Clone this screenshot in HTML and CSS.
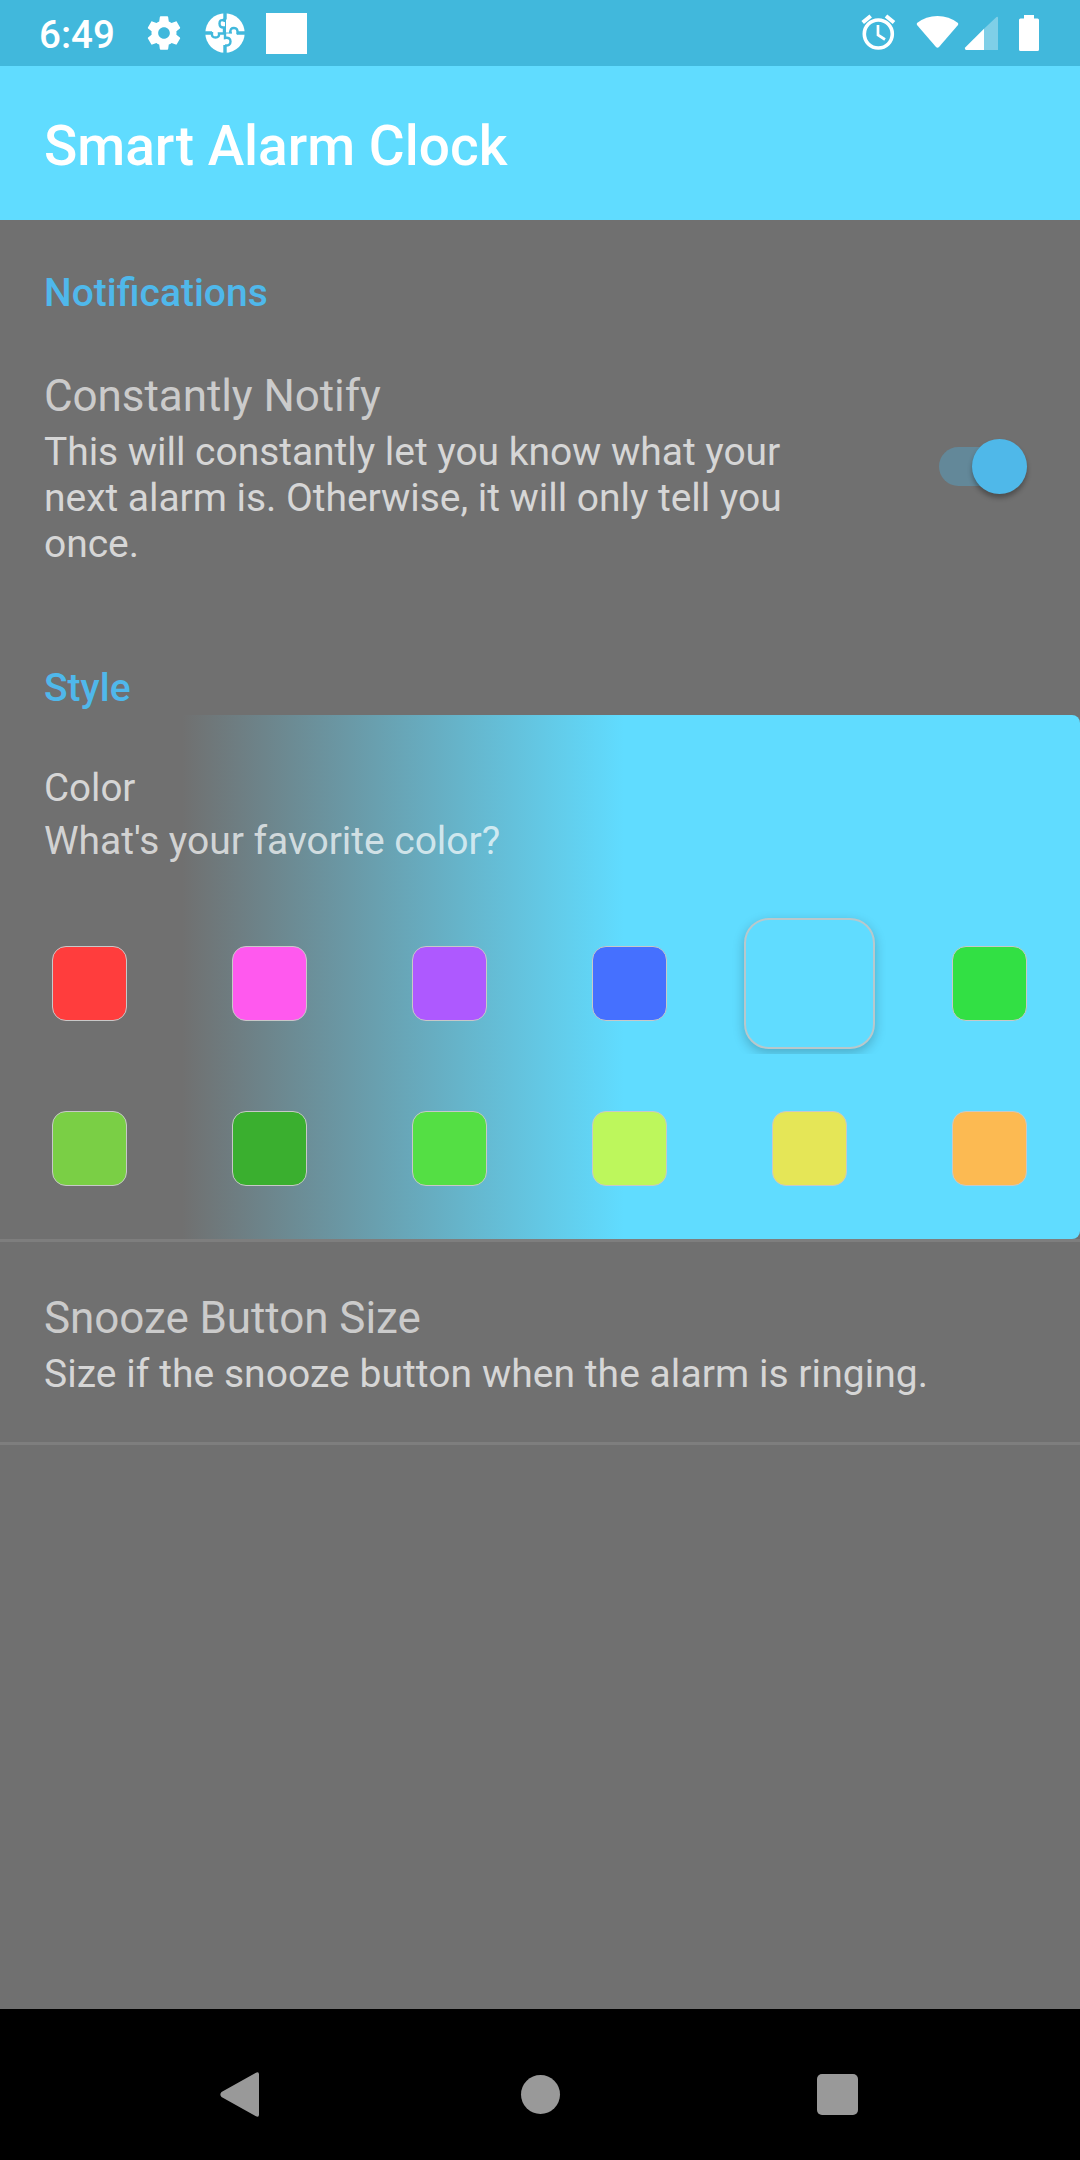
FILE: index.html
```html
<!DOCTYPE html>
<html lang="en">
<head>
<meta charset="utf-8">
<title>Smart Alarm Clock</title>
<link rel="stylesheet" href="styles.css">
</head>
<body>
<div class="screen">
  <header class="status-bar">
    <span class="clock">6:49</span>
    <svg class="gear" width="40" height="40" viewBox="0 0 24 24"><path fill="#fff" d="M19.43 12.98c.04-.32.07-.64.07-.98s-.03-.66-.07-.98l2.110-1.650c.19-.15.24-.42.12-.64l-2-3.460c-.12-.22-.39-.3-.61-.22l-2.490 1c-.52-.4-1.080-.73-1.690-.98l-.38-2.650C14.460 2.180 14.250 2 14 2h-4c-.25 0-.46.18-.49.42l-.38 2.650c-.61.25-1.170.59-1.690.98l-2.490-1c-.23-.09-.49 0-.61.22l-2 3.460c-.13.22-.07.49.12.64l2.110 1.650c-.04.32-.07.65-.07.98s.03.66.07.98l-2.110 1.650c-.19.15-.24.42-.12.64l2 3.460c.12.22.39.3.61.22l2.490-1c.52.4 1.080.73 1.690.98l.38 2.650c.03.24.24.42.49.42h4c.25 0 .46-.18.49-.42l.38-2.650c.61-.25 1.170-.59 1.690-.98l2.490 1c.23.09.49 0 .61-.22l2-3.460c.12-.22.07-.49-.12-.64l-2.110-1.650zM12 15.500c-1.930 0-3.500-1.570-3.500-3.500s1.570-3.500 3.500-3.500 3.500 1.570 3.500 3.500-1.570 3.500-3.500 3.500z"/></svg>
    <svg class="puzzle" width="40" height="40" viewBox="0 0 40 40">
      <circle cx="20" cy="20" r="19.700" fill="#fff"/>
      <g fill="none" stroke="#41b8dc">
        <path stroke-width="3.400" d="M20 0V6.500M20 32V40M0 20H7M32 20H40"/>
        <path stroke-width="2.400" d="M19 5.500V7.500Q14.500 6 14.500 10.500T19 14.500V20M7 19V20.500Q6.500 24.500 10.500 24.500T14 20.500H20M20 20V25Q25.500 24 25.500 28.500T20 32.500M33 20H32.500Q33 15 29 15T25.500 19H24"/>
        <path stroke-width="1" d="M20.500 5V20H27"/>
      </g>
    </svg>
    <span class="app-square"></span>
    <svg class="system" width="190" height="66" viewBox="850 0 190 66">
      <g fill="none" stroke="#fff" stroke-width="3.600"><circle cx="878.300" cy="34" r="14"/><path d="M878 25v10l7 4.500" stroke-width="2.700"/><path d="M862.700 22.500l8-6.500M894 22.500l-8-6.500" stroke-width="4"/></g>
      <path fill="#fff" d="M917 23Q926 16 937.500 16T958 23Q958.500 24 958 25L939 47Q937.500 48.500 936 47L917 25Q916.500 24 917 23z"/>
      <path fill="#fff" opacity=".33" d="M984 28.700L996.500 17q1.500-.8 1.500 1V50h-14z"/>
      <path fill="#fff" d="M984 28.700V50h-18q-2-1-.8-2.500z"/>
      <path fill="#fff" d="M1024 15h10v3.500h3.500q1.500 0 1.500 1.500v29.500q0 1.500-1.500 1.500h-17q-1.500 0-1.500-1.500V20q0-1.500 1.500-1.500h3.500z"/>
    </svg>
  </header>
  <div class="app-bar"><h1>Smart Alarm Clock</h1></div>
  <main class="settings">
    <h2 class="category first">Notifications</h2>
    <section class="notify">
      <div class="notify-text">
        <h3>Constantly Notify</h3>
        <p>This will constantly let you know what your next alarm is. Otherwise, it will only tell you once.</p>
      </div>
      <div class="switch"><span class="thumb"></span></div>
    </section>
    <h2 class="category">Style</h2>
    <section class="color-panel">
      <p class="color-title">Color</p>
      <p class="color-summary">What's your favorite color?</p>
      <div class="swatches">
        <div class="cell"><span class="swatch red"></span></div>
        <div class="cell"><span class="swatch pink"></span></div>
        <div class="cell"><span class="swatch purple"></span></div>
        <div class="cell"><span class="swatch blue"></span></div>
        <div class="cell"><span class="swatch cyan selected"></span></div>
        <div class="cell"><span class="swatch green"></span></div>
        <div class="cell"><span class="swatch olive"></span></div>
        <div class="cell"><span class="swatch forest"></span></div>
        <div class="cell"><span class="swatch lime"></span></div>
        <div class="cell"><span class="swatch pale"></span></div>
        <div class="cell"><span class="swatch yellow"></span></div>
        <div class="cell"><span class="swatch orange"></span></div>
      </div>
    </section>
    <section class="snooze">
      <h3>Snooze Button Size</h3>
      <p>Size if the snooze button when the alarm is ringing.</p>
    </section>
  </main>
  <nav class="nav-bar">
    <svg width="40" height="46" viewBox="0 0 40 46"><path fill="#999" d="M35.500 1Q39 -.8 39 2.500V42.500Q39 46 35.500 44L1.500 25Q-.8 22.500 1.500 20z"/></svg>
    <span class="home"></span>
    <span class="recent"></span>
  </nav>
</div>
</body>
</html>
```
FILE: styles.css
```css
* { box-sizing: border-box; }
body, h1, h2, h3, p { margin: 0; }
body { font-family: Roboto, sans-serif; background: #707070; }
.screen { width: 1080px; height: 2160px; display: flex; flex-direction: column; overflow: hidden; }

.status-bar { height: 66px; background: #41b8dc; display: flex; align-items: center; color: #fff; padding: 0 40px 0 39px; }
.clock { font-size: 38.5px; font-weight: 500; line-height: 66px; width: 105px; padding-top: 3px; }
.puzzle { margin-left: 21px; }
.app-square { width: 41px; height: 41px; background: #fff; margin-left: 21px; }
.system { margin-left: auto; }

.app-bar { height: 154px; background: #60dcff; padding: 48px 44px 0; }
h1 { font-size: 55px; line-height: 64px; font-weight: 500; color: #fff; }

.settings { flex: 1; }
.category { font-size: 39px; line-height: 46px; font-weight: 500; color: #4fb8eb; padding: 0 44px; margin-top: 98px; }
.category.first { margin-top: 0; padding-top: 50px; }
.notify { display: flex; align-items: center; padding: 54px 53px 0 44px; }
.notify-text { width: 760px; }
h3 { font-size: 44px; line-height: 52px; font-weight: 400; letter-spacing: -.07px; color: #cbcbcb; }
.notify p, .snooze p { font-size: 39px; line-height: 46px; color: #d6d6d6; padding-top: 7px; }
.notify p { letter-spacing: -.04px; }
.snooze p { letter-spacing: .05px; }
.switch { margin: 0 0 5px auto; width: 88px; height: 39px; border-radius: 20px; background: #638899; display: flex; align-items: center; justify-content: flex-end; }
.thumb { width: 55px; height: 55px; flex: none; border-radius: 50%; background: #4fb8e9; box-shadow: 0 4px 5px rgba(0,0,0,.3); }

.color-panel { height: 524px; margin-top: 4px; padding-top: 50px; border-radius: 8px; background: linear-gradient(90deg, #707070 182px, #60dcff 624px); }
.color-title, .color-summary { font-size: 38.5px; line-height: 46px; color: #d6d6d6; padding-left: 44px; }
.color-summary { font-size: 39px; letter-spacing: -.04px; color: rgba(255,255,255,.71); margin-top: 7px; }
.swatches { display: grid; grid-template-columns: repeat(6, 180px); grid-template-rows: 165px 165px; margin: 37px 0 0 -1px; }
.cell { display: flex; align-items: center; justify-content: center; }
.swatch { width: 75px; height: 75px; border: 1px solid #c8c8c8; border-radius: 14px; }
.selected { width: 131px; height: 131px; flex: none; border: 2px solid #b8c8cc; border-radius: 25px; box-shadow: 0 4px 12px rgba(0,0,0,.22); clip-path: inset(-12px -12px -5px); }
.red { background: #ff3d3d; }
.pink { background: #ff59ee; }
.purple { background: #ae59ff; }
.blue { background: #4570ff; }
.cyan { background: #60dcff; }
.green { background: #32e044; }
.olive { background: #7acf45; }
.forest { background: #3aaf2f; }
.lime { background: #54df44; }
.pale { background: #bdf75c; }
.yellow { background: #e5e657; }
.orange { background: #fcba52; }

.snooze { height: 206px; border-top: 3px solid #7e7e7e; border-bottom: 3px solid #7e7e7e; padding: 50px 44px 0; }

.nav-bar { height: 151px; background: #000; display: flex; justify-content: space-between; align-items: center; padding: 20px 222px 0 220px; }
.home { width: 39px; height: 39px; border-radius: 50%; background: #999; margin-left: 3px; }
.recent { width: 41px; height: 41px; border-radius: 5px; background: #999; }
```
